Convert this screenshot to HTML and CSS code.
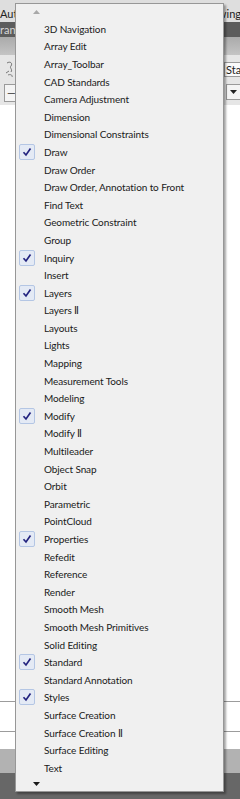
FILE: index.html
```html
<!DOCTYPE html>
<html>
<head>
<meta charset="utf-8">
<link rel="stylesheet" href="styles.css">
</head>
<body>
<div class="app">
  <div class="titlebar"><span>Autodesk</span><span>Drawing</span></div>
  <div class="tabbar"><span>ran</span></div>
  <div class="ribbon"></div>
  <div class="toolbar">
    <div class="tool-icon">
      <svg width="10" height="20" viewBox="0 0 10 20"><path d="M2 4 C5 2 8 4 6 7 C4 9 8 10 6 13 M1 14 L4 12 M3 16 C5 15 8 16 7 18" fill="none" stroke="#777" stroke-width="1"/></svg>
    </div>
    <div class="sta-box">Sta</div>
  </div>
  <div class="comborow">
    <div class="combo-left">—</div>
    <div class="combo-right"><svg width="7" height="4" viewBox="0 0 7 4"><path d="M0 0 H7 L3.5 4 Z" fill="#222"/></svg></div>
  </div>
  <div class="canvas"></div>
  <div class="hline"></div>
  <div class="canvas gap"></div>
  <div class="hline"></div>
  <div class="canvas gap2"></div>
  <div class="status1"></div>
  <div class="status2"></div>
</div>

<div class="menu">
  <div class="scroll up"><svg width="7" height="4" viewBox="0 0 7 4"><path d="M0 4 H7 L3.5 0 Z" fill="#a8a8a8"/></svg></div>
  <ul class="items">
    <li><span class="chk"></span>3D Navigation</li>
    <li><span class="chk"></span>Array Edit</li>
    <li><span class="chk"></span>Array_Toolbar</li>
    <li><span class="chk"></span>CAD Standards</li>
    <li><span class="chk"></span>Camera Adjustment</li>
    <li><span class="chk"></span>Dimension</li>
    <li><span class="chk"></span>Dimensional Constraints</li>
    <li class="on"><span class="chk"><svg viewBox="0 0 14 14" width="14" height="14"><path d="M3.5 7.2 L6 10 L10.5 3.5" fill="none" stroke="#23237f" stroke-width="1.7"/></svg></span>Draw</li>
    <li><span class="chk"></span>Draw Order</li>
    <li><span class="chk"></span>Draw Order, Annotation to Front</li>
    <li><span class="chk"></span>Find Text</li>
    <li><span class="chk"></span>Geometric Constraint</li>
    <li><span class="chk"></span>Group</li>
    <li class="on"><span class="chk"><svg viewBox="0 0 14 14" width="14" height="14"><path d="M3.5 7.2 L6 10 L10.5 3.5" fill="none" stroke="#23237f" stroke-width="1.7"/></svg></span>Inquiry</li>
    <li><span class="chk"></span>Insert</li>
    <li class="on"><span class="chk"><svg viewBox="0 0 14 14" width="14" height="14"><path d="M3.5 7.2 L6 10 L10.5 3.5" fill="none" stroke="#23237f" stroke-width="1.7"/></svg></span>Layers</li>
    <li><span class="chk"></span>Layers Ⅱ</li>
    <li><span class="chk"></span>Layouts</li>
    <li><span class="chk"></span>Lights</li>
    <li><span class="chk"></span>Mapping</li>
    <li><span class="chk"></span>Measurement Tools</li>
    <li><span class="chk"></span>Modeling</li>
    <li class="on"><span class="chk"><svg viewBox="0 0 14 14" width="14" height="14"><path d="M3.5 7.2 L6 10 L10.5 3.5" fill="none" stroke="#23237f" stroke-width="1.7"/></svg></span>Modify</li>
    <li><span class="chk"></span>Modify Ⅱ</li>
    <li><span class="chk"></span>Multileader</li>
    <li><span class="chk"></span>Object Snap</li>
    <li><span class="chk"></span>Orbit</li>
    <li><span class="chk"></span>Parametric</li>
    <li><span class="chk"></span>PointCloud</li>
    <li class="on"><span class="chk"><svg viewBox="0 0 14 14" width="14" height="14"><path d="M3.5 7.2 L6 10 L10.5 3.5" fill="none" stroke="#23237f" stroke-width="1.7"/></svg></span>Properties</li>
    <li><span class="chk"></span>Refedit</li>
    <li><span class="chk"></span>Reference</li>
    <li><span class="chk"></span>Render</li>
    <li><span class="chk"></span>Smooth Mesh</li>
    <li><span class="chk"></span>Smooth Mesh Primitives</li>
    <li><span class="chk"></span>Solid Editing</li>
    <li class="on"><span class="chk"><svg viewBox="0 0 14 14" width="14" height="14"><path d="M3.5 7.2 L6 10 L10.5 3.5" fill="none" stroke="#23237f" stroke-width="1.7"/></svg></span>Standard</li>
    <li><span class="chk"></span>Standard Annotation</li>
    <li class="on"><span class="chk"><svg viewBox="0 0 14 14" width="14" height="14"><path d="M3.5 7.2 L6 10 L10.5 3.5" fill="none" stroke="#23237f" stroke-width="1.7"/></svg></span>Styles</li>
    <li><span class="chk"></span>Surface Creation</li>
    <li><span class="chk"></span>Surface Creation Ⅱ</li>
    <li><span class="chk"></span>Surface Editing</li>
    <li><span class="chk"></span>Text</li>
  </ul>
  <div class="scroll down"><svg width="7" height="4" viewBox="0 0 7 4"><path d="M0 0 H7 L3.5 4 Z" fill="#1a1a1a"/></svg></div>
</div>
</body>
</html>
```
FILE: styles.css
```css
* { box-sizing: border-box; }
html, body { margin: 0; padding: 0; }
body {
  width: 240px;
  height: 799px;
  overflow: hidden;
  position: relative;
  font-family: "Lato", "Open Sans", "DejaVu Sans", sans-serif;
  background: #ffffff;
}
.app {
  display: flex;
  flex-direction: column;
  height: 799px;
}
.titlebar {
  height: 22px;
  background: #dedede;
  display: flex;
  justify-content: space-between;
  align-items: center;
  font-size: 11px;
  color: #222;
  padding-top: 4px;
  overflow: hidden;
}
.titlebar span:last-child { margin-right: -1px; }
.tabbar {
  height: 15px;
  background: #5c5c5c;
  color: #d8d8d8;
  font-size: 11px;
  line-height: 15px;
  overflow: hidden;
}
.ribbon {
  height: 18px;
  background: linear-gradient(#aaaaaa, #c4c4c4);
}
.toolbar {
  height: 28px;
  background: #e6e6e6;
  display: flex;
  justify-content: space-between;
  align-items: center;
}
.tool-icon { display: flex; padding-left: 5px; }
.sta-box {
  width: 16px;
  height: 15px;
  background: #fafafa;
  border: 1px solid #9a9a9a;
  border-right: none;
  font-size: 11px;
  line-height: 13px;
  padding-left: 1px;
  overflow: hidden;
  color: #222;
}
.comborow {
  height: 22px;
  background: #e6e6e6;
  display: flex;
  justify-content: space-between;
  align-items: flex-start;
  padding-top: 1px;
}
.combo-left {
  margin-left: 4px;
  width: 12px;
  height: 18px;
  border: 1px solid #9a9a9a;
  border-right: none;
  background: #f4f4f4;
  font-size: 11px;
  line-height: 16px;
  padding-left: 2px;
  color: #333;
  overflow: hidden;
}
.combo-right {
  width: 14px;
  height: 16px;
  border: 1px solid #9a9a9a;
  border-right: none;
  background: #f4f4f4;
  display: flex;
  justify-content: center;
  align-items: center;
}
.canvas { flex: 1; background: #ffffff; }
.canvas.gap { flex: 0 0 29px; }
.canvas.gap2 { flex: 0 0 17px; }
.hline { height: 1px; background: #9c9c9c; }
.status1 { height: 24px; background: #b2b2b2; }
.status2 { height: 26px; background: #676767; }

.menu {
  position: absolute;
  left: 15px;
  top: 3px;
  width: 209px;
  height: 789px;
  background: #f0f0f0;
  border: 1px solid #979797;
  box-shadow: 2px 2px 2px rgba(0,0,0,0.35);
  display: flex;
  flex-direction: column;
}
.scroll {
  height: 16px;
  display: flex;
  align-items: center;
  padding-left: 17px;
}
.scroll.down { height: 14px; }
.items {
  list-style: none;
  margin: 0;
  padding: 0;
}
.items li {
  height: 17.6px;
  display: flex;
  align-items: center;
  font-size: 10px;
  letter-spacing: -0.1px;
  color: #1a1a1a;
  white-space: nowrap;
}
.chk {
  width: 16px;
  height: 16px;
  margin-left: 3px;
  margin-right: 9px;
  flex: none;
  display: flex;
  align-items: center;
  justify-content: center;
}
.on .chk {
  background: #e4eaf5;
  border: 1px solid #b4c6e4;
  border-radius: 2px;
}
```
